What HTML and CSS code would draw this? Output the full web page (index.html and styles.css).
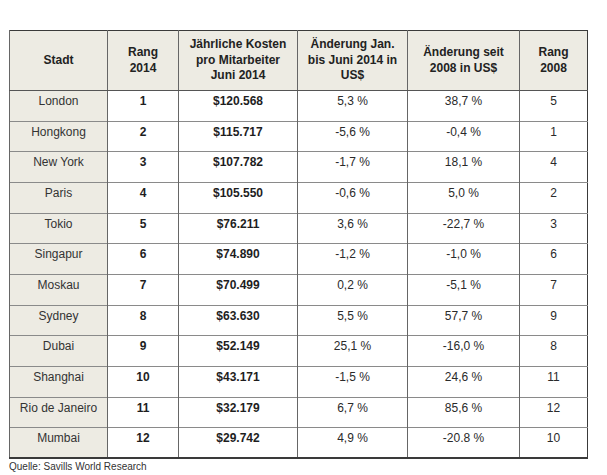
FILE: index.html
```html
<!DOCTYPE html>
<html lang="de">
<head>
<meta charset="utf-8">
<link rel="stylesheet" href="styles.css">
</head>
<body>
<div class="page">
<table class="costs">
  <colgroup>
    <col class="c-city"><col class="c-rank"><col class="c-cost"><col class="c-jan"><col class="c-since"><col class="c-rank08">
  </colgroup>
  <thead>
    <tr>
      <th>Stadt</th>
      <th>Rang<br>2014</th>
      <th>Jährliche Kosten<br>pro Mitarbeiter<br>Juni 2014</th>
      <th>Änderung Jan.<br>bis Juni 2014 in<br>US$</th>
      <th>Änderung seit<br>2008 in US$</th>
      <th>Rang<br>2008</th>
    </tr>
  </thead>
  <tbody>
    <tr><td class="city">London</td><td class="b">1</td><td class="b">$120.568</td><td>5,3 %</td><td>38,7 %</td><td>5</td></tr>
    <tr><td class="city">Hongkong</td><td class="b">2</td><td class="b">$115.717</td><td>-5,6 %</td><td>-0,4 %</td><td>1</td></tr>
    <tr><td class="city">New York</td><td class="b">3</td><td class="b">$107.782</td><td>-1,7 %</td><td>18,1 %</td><td>4</td></tr>
    <tr><td class="city">Paris</td><td class="b">4</td><td class="b">$105.550</td><td>-0,6 %</td><td>5,0 %</td><td>2</td></tr>
    <tr><td class="city">Tokio</td><td class="b">5</td><td class="b">$76.211</td><td>3,6 %</td><td>-22,7 %</td><td>3</td></tr>
    <tr><td class="city">Singapur</td><td class="b">6</td><td class="b">$74.890</td><td>-1,2 %</td><td>-1,0 %</td><td>6</td></tr>
    <tr><td class="city">Moskau</td><td class="b">7</td><td class="b">$70.499</td><td>0,2 %</td><td>-5,1 %</td><td>7</td></tr>
    <tr><td class="city">Sydney</td><td class="b">8</td><td class="b">$63.630</td><td>5,5 %</td><td>57,7 %</td><td>9</td></tr>
    <tr><td class="city">Dubai</td><td class="b">9</td><td class="b">$52.149</td><td>25,1 %</td><td>-16,0 %</td><td>8</td></tr>
    <tr><td class="city">Shanghai</td><td class="b">10</td><td class="b">$43.171</td><td>-1,5 %</td><td>24,6 %</td><td>11</td></tr>
    <tr><td class="city">Rio de Janeiro</td><td class="b">11</td><td class="b">$32.179</td><td>6,7 %</td><td>85,6 %</td><td>12</td></tr>
    <tr><td class="city">Mumbai</td><td class="b">12</td><td class="b">$29.742</td><td>4,9 %</td><td>-20.8 %</td><td>10</td></tr>
  </tbody>
</table>
<p class="source">Quelle: Savills World Research</p>
</div>
</body>
</html>
```

FILE: styles.css
```css
html, body {
  margin: 0;
  padding: 0;
  background: #ffffff;
}

.page {
  padding: 30px 0 0 9px;
  font-family: "Liberation Sans", Arial, sans-serif;
  color: #222;
}

.costs {
  border-collapse: collapse;
  table-layout: fixed;
  width: 578px;
  border: 1px solid #3a3a3a;
  border-bottom: 2px solid #3a3a3a;
}

.c-city { width: 98px; }
.c-rank { width: 71px; }
.c-cost { width: 119px; }
.c-jan { width: 110px; }
.c-since { width: 112px; }
.c-rank08 { width: 68px; }

.costs th {
  height: 59px;
  background: #edebe3;
  font-size: 12px;
  line-height: 15.5px;
  font-weight: bold;
  color: #222;
  text-align: center;
  vertical-align: middle;
  padding: 0 2px;
  border-left: 1px solid #666;
  border-bottom: 1px solid #555;
}

.costs td {
  height: 30.67px;
  box-sizing: border-box;
  font-size: 12px;
  line-height: 14px;
  text-align: center;
  vertical-align: top;
  padding: 3px 2px 0;
  color: #2a2a2a;
  border-left: 1px solid #666;
  border-top: 1px solid #8a8a8a;
}

.costs td.city {
  background: #edebe3;
  color: #333;
}

.costs td.b {
  font-weight: bold;
  color: #1e1e1e;
}

.source {
  margin: 2px 0 0 0;
  font-size: 10px;
  line-height: 12px;
  color: #333;
}
```
